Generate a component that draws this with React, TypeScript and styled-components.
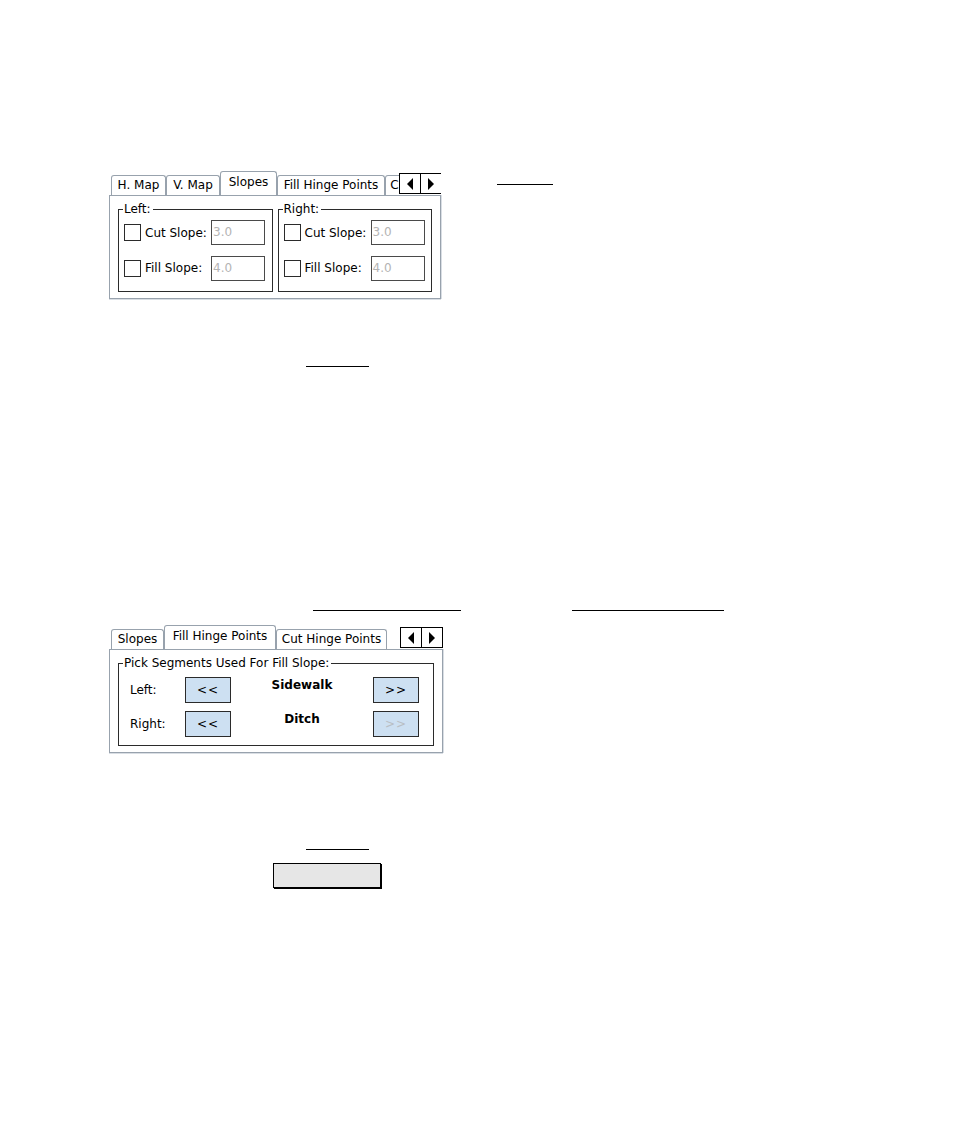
import * as React from "react"
import styled, { createGlobalStyle } from "styled-components"

const GlobalStyle = createGlobalStyle`
  html, body {
    margin: 0;
    padding: 0;
    background: #ffffff;
  }
  body {
    font-family: "DejaVu Sans", "Liberation Sans", sans-serif;
    font-size: 12px;
    color: #000;
  }
`

const Page = styled.div`
  width: 954px;
  height: 1144px;
  display: flex;
  flex-direction: column;
  overflow: hidden;
`

const Row = styled.div<{ $top: number; $left: number }>`
  display: flex;
  align-items: flex-start;
  margin-top: ${(p) => p.$top}px;
  padding-left: ${(p) => p.$left}px;
`

const Blank = styled.div<{ $width: number; $gap?: number; $top?: number }>`
  width: ${(p) => p.$width}px;
  height: 1px;
  background: #000;
  margin-left: ${(p) => p.$gap ?? 0}px;
  margin-top: ${(p) => p.$top ?? 0}px;
`

const GrayField = styled.div`
  width: 106px;
  height: 23px;
  background: #e6e6e6;
  border: 1px solid #000;
  box-shadow: 1px 1px 0 #000;
`

/* ---------- tab widget ---------- */

const Widget = styled.div<{ $width: number }>`
  width: ${(p) => p.$width}px;
  display: flex;
  flex-direction: column;
`

const TabBar = styled.div`
  position: relative;
  height: 24px;
  display: flex;
  align-items: flex-end;
  padding-left: 2px;
  overflow: hidden;
  z-index: 1;
`

const Tab = styled.div<{ $active?: boolean; $width: number }>`
  flex: none;
  width: ${(p) => p.$width}px;
  height: ${(p) => (p.$active ? 25 : 20)}px;
  margin-bottom: ${(p) => (p.$active ? -1 : 0)}px;
  padding-top: ${(p) => (p.$active ? 3 : 2)}px;
  box-sizing: border-box;
  border: 1px solid #98a2ad;
  border-bottom: none;
  border-radius: 3px 3px 0 0;
  background: #fff;
  line-height: 15px;
  text-align: center;
  white-space: nowrap;
  overflow: hidden;
  position: relative;
  z-index: ${(p) => (p.$active ? 2 : 0)};
`

const Arrows = styled.div<{ $right: number }>`
  position: absolute;
  top: 2px;
  right: ${(p) => p.$right}px;
  display: flex;
  background: #fff;
  border: 1px solid #000;
  z-index: 3;
`

const ArrowCell = styled.div<{ $first?: boolean }>`
  width: 20px;
  height: 19px;
  display: flex;
  align-items: center;
  justify-content: center;
  border-left: ${(p) => (p.$first ? "none" : "1px solid #000")};
`

const Panel = styled.div<{ $height: number }>`
  height: ${(p) => p.$height}px;
  box-sizing: border-box;
  border: 1px solid #98a2ad;
  box-shadow: 0 1px 0 #d9dee4, 1px 0 0 #d9dee4;
  background: #fff;
  padding: 6px 8px 6px 8px;
  display: flex;
  gap: 5px;
`

const Group = styled.fieldset`
  margin: 0;
  flex: 1;
  min-width: 0;
  border: 1px solid #2b2b2b;
  padding: 4px 0 0 5px;
  display: flex;
  flex-direction: column;
`

const Legend = styled.legend`
  padding: 0 2px 0 1px;
  margin-left: -1px;
  line-height: 14px;
`

const SlopeRow = styled.div`
  display: flex;
  align-items: center;
  height: 26px;
  margin-bottom: 10px;
`

const Check = styled.div`
  width: 15px;
  height: 15px;
  border: 1px solid #2b2b2b;
  background: #fff;
  flex: none;
`

const CheckLabel = styled.span<{ $width: number }>`
  width: ${(p) => p.$width}px;
  margin-left: 4px;
  flex: none;
  white-space: nowrap;
`

const ValueBox = styled.div`
  width: 51px;
  height: 23px;
  border: 1px solid #4a4a4a;
  box-sizing: content-box;
  color: #b4b4b4;
  line-height: 23px;
  padding-left: 1px;
`

const SegRow = styled.div<{ $offset?: number }>`
  display: flex;
  align-items: center;
  height: 26px;
  margin-top: ${(p) => p.$offset ?? 0}px;
  margin-bottom: 8px;
`

const SegLabel = styled.span`
  width: 61px;
  padding-left: 6px;
  flex: none;
  box-sizing: border-box;
`

const SegButton = styled.div<{ $disabled?: boolean }>`
  width: 44px;
  height: 24px;
  border: 1px solid #2b2b2b;
  background: #cde0f2;
  display: flex;
  align-items: center;
  justify-content: center;
  color: ${(p) => (p.$disabled ? "#b9bec4" : "#000")};
  letter-spacing: 1px;
  flex: none;
`

const SegName = styled.span`
  width: 142px;
  flex: none;
  text-align: center;
  font-weight: bold;
  align-self: flex-start;
  margin-top: 1px;
`

const Triangle = ({ dir }: { dir: "left" | "right" }) => (
  <svg width="8" height="12" viewBox="0 0 8 12">
    {dir === "left" ? <path d="M7 0 L1 6 L7 12 Z" fill="#000" /> : <path d="M1 0 L7 6 L1 12 Z" fill="#000" />}
  </svg>
)

type TabDef = { label: string; width: number }

type TabWidgetProps = {
  width: number
  tabs: TabDef[]
  active: number
  arrowsRight: number
  panelHeight: number
  children: React.ReactNode
}

const TabWidget = ({ width, tabs, active, arrowsRight, panelHeight, children }: TabWidgetProps) => (
  <Widget $width={width}>
    <TabBar>
      {tabs.map((t, i) => (
        <Tab key={t.label} $active={i === active} $width={t.width}>
          {t.label}
        </Tab>
      ))}
      <Arrows $right={arrowsRight}>
        <ArrowCell $first>
          <Triangle dir="left" />
        </ArrowCell>
        <ArrowCell>
          <Triangle dir="right" />
        </ArrowCell>
      </Arrows>
    </TabBar>
    <Panel $height={panelHeight}>{children}</Panel>
  </Widget>
)

const SlopeGroup = ({ title }: { title: string }) => (
  <Group>
    <Legend>{title}</Legend>
    <SlopeRow>
      <Check />
      <CheckLabel $width={66}>Cut Slope:</CheckLabel>
      <ValueBox>3.0</ValueBox>
    </SlopeRow>
    <SlopeRow>
      <Check />
      <CheckLabel $width={66}>Fill Slope:</CheckLabel>
      <ValueBox>4.0</ValueBox>
    </SlopeRow>
  </Group>
)

export default function App() {
  return (
    <>
      <GlobalStyle />
      <Page>
        <Row $top={171} $left={109}>
          <TabWidget
            width={332}
            tabs={[
              { label: "H. Map", width: 55 },
              { label: "V. Map", width: 54 },
              { label: "Slopes", width: 57 },
              { label: "Fill Hinge Points", width: 108 },
              { label: "Cut Hinge Points", width: 110 },
            ]}
            active={2}
            arrowsRight={-1}
            panelHeight={104}
          >
            <SlopeGroup title="Left:" />
            <SlopeGroup title="Right:" />
          </TabWidget>
          <Blank $width={56} $gap={56} $top={13} />
        </Row>

        <Row $top={67} $left={306}>
          <Blank $width={63} />
        </Row>

        <Row $top={243} $left={313}>
          <Blank $width={148} />
          <Blank $width={152} $gap={111} />
        </Row>

        <Row $top={14} $left={109}>
          <TabWidget
            width={334}
            tabs={[
              { label: "Slopes", width: 53 },
              { label: "Fill Hinge Points", width: 112 },
              { label: "Cut Hinge Points", width: 111 },
            ]}
            active={1}
            arrowsRight={0}
            panelHeight={104}
          >
            <Group>
              <Legend>Pick Segments Used For Fill Slope:</Legend>
              <SegRow $offset={3}>
                <SegLabel>Left:</SegLabel>
                <SegButton>&lt;&lt;</SegButton>
                <SegName>Sidewalk</SegName>
                <SegButton>&gt;&gt;</SegButton>
              </SegRow>
              <SegRow>
                <SegLabel>Right:</SegLabel>
                <SegButton>&lt;&lt;</SegButton>
                <SegName>Ditch</SegName>
                <SegButton $disabled>&gt;&gt;</SegButton>
              </SegRow>
            </Group>
          </TabWidget>
        </Row>

        <Row $top={96} $left={306}>
          <Blank $width={63} />
        </Row>

        <Row $top={13} $left={273}>
          <GrayField />
        </Row>
      </Page>
    </>
  )
}
